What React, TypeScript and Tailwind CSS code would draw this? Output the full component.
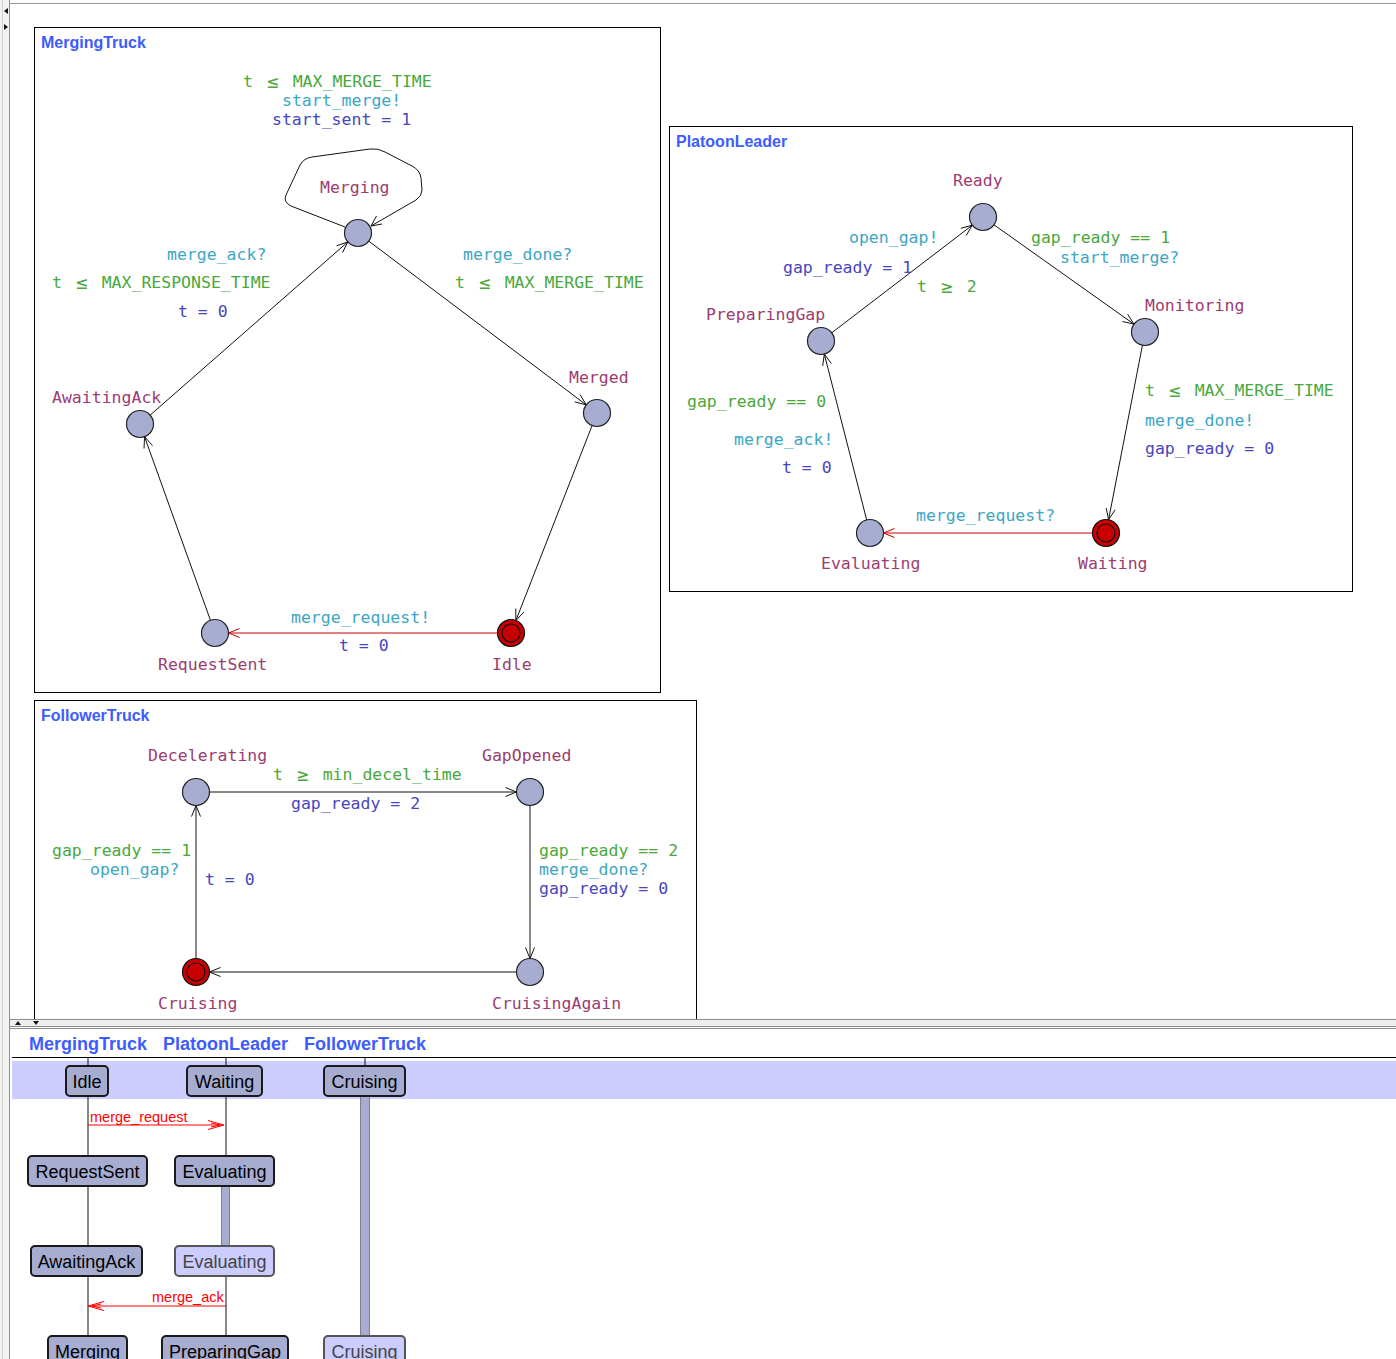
import React from 'react'

// monospace cell width for DejaVu Sans Mono at 16.5px
const CW = 9.93
const C = { loc: '#9c3c70', guard: '#48a83c', sync: '#3ca6c4', upd: '#4646c0' }

type Pt = { x: number; y: number }

function Label({ x, y, c, s }: { x: number; y: number; c: string; s: string }) {
    // "<=" and ">=" take two cells, drawn as one centred glyph
    const out: React.ReactNode[] = []
    let run = ''
    let start = 0
    const flush = (end: number) => {
        const lead = run.length - run.trimStart().length
        const t = run.trim()
        if (t) out.push(<text key={'r' + start} x={x + (start + lead) * CW} y={y} fill={c} dominantBaseline="central">{t}</text>)
        run = ''
        start = end
    }
    let i = 0
    while (i < s.length) {
        const two = s.slice(i, i + 2)
        if (two === '<=' || two === '>=') {
            flush(i)
            out.push(<text key={'l' + i} x={x + (i + 1) * CW} y={y} fill={c} fontSize={19} textAnchor="middle" dominantBaseline="central">{two === '<=' ? '≤' : '≥'}</text>)
            i += 2
            start = i
        } else {
            run += s[i]
            i++
        }
    }
    flush(i)
    return <g>{out}</g>
}

function Loc({ x, y, init }: { x: number; y: number; init?: boolean }) {
    if (init) {
        return (
            <g>
                <circle cx={x} cy={y} r={13.5} fill="#c80000" stroke="#111" strokeWidth={1.2} />
                <circle cx={x} cy={y} r={9} fill="none" stroke="#111" strokeWidth={1.2} />
            </g>
        )
    }
    return <circle cx={x} cy={y} r={13.5} fill="#a6add0" stroke="#222" strokeWidth={1.2} />
}

function Edge({ a, b, red }: { a: Pt; b: Pt; red?: boolean }) {
    const dx = b.x - a.x
    const dy = b.y - a.y
    const L = Math.hypot(dx, dy)
    const ux = dx / L
    const uy = dy / L
    const tx = b.x - ux * 13.5
    const ty = b.y - uy * 13.5
    const bx = tx - ux * 11
    const by = ty - uy * 11
    const col = red ? '#c80000' : '#111'
    return (
        <g stroke={col} strokeWidth={1} fill="none">
            <line x1={a.x} y1={a.y} x2={tx} y2={ty} />
            <path d={`M${bx + uy * 4.5} ${by - ux * 4.5} L${tx} ${ty} L${bx - uy * 4.5} ${by + ux * 4.5}`} />
        </g>
    )
}

function Template({ pos, px, py, w, h, title, children }: { pos: string; px: number; py: number; w: number; h: number; title: string; children: React.ReactNode }) {
    return (
        <div className={`absolute border border-black bg-white ${pos}`}>
            <div className="pl-[6px] pt-[6px] font-['Liberation_Sans',Arial,sans-serif] font-bold text-[16px] leading-[18px] text-[#3c5cff]">{title}</div>
            <svg className="absolute -left-px -top-px overflow-visible font-['DejaVu_Sans_Mono',monospace] text-[16.5px]" width={w} height={h} viewBox={`${px} ${py} ${w} ${h}`}>
                {children}
            </svg>
        </div>
    )
}

// MergingTruck locations
const mMerging = { x: 358, y: 233 }
const mAwait = { x: 140, y: 424 }
const mMerged = { x: 597, y: 413 }
const mReq = { x: 215, y: 633 }
const mIdle = { x: 511, y: 633 }

// PlatoonLeader locations
const pReady = { x: 983, y: 217 }
const pMon = { x: 1145, y: 332 }
const pPrep = { x: 821, y: 341 }
const pEval = { x: 870, y: 533 }
const pWait = { x: 1106, y: 533 }

// FollowerTruck locations
const fDec = { x: 196, y: 792 }
const fGap = { x: 530, y: 792 }
const fCru = { x: 196, y: 972 }
const fAgain = { x: 530, y: 972 }

const mscBoxes = [
    { x: 66, y: 1065, w: 42, t: 'Idle' },
    { x: 187, y: 1065, w: 75, t: 'Waiting' },
    { x: 324, y: 1065, w: 81, t: 'Cruising' },
    { x: 28, y: 1155, w: 119, t: 'RequestSent' },
    { x: 175, y: 1155, w: 99, t: 'Evaluating' },
    { x: 31, y: 1245, w: 111, t: 'AwaitingAck' },
    { x: 175, y: 1245, w: 99, t: 'Evaluating', light: true },
    { x: 48, y: 1335, w: 79, t: 'Merging' },
    { x: 162, y: 1335, w: 126, t: 'PreparingGap' },
    { x: 324, y: 1335, w: 81, t: 'Cruising', light: true },
]

export default function App() {
    return (
        <div className="flex w-[1396px] h-[1359px] overflow-hidden bg-white">
            {/* left splitter strip */}
            <div className="relative w-[10px] shrink-0 bg-[#f2f2f2] border-r border-[#8c8c8c]">
                <div className="absolute left-[2px] top-0 bottom-0 w-px bg-[#d0d0d0]" />
                <svg className="absolute left-0 top-0" width={10} height={36}>
                    <path d="M4 11 L8 8 L8 14 Z" fill="#111" />
                    <path d="M8 27 L4 24 L4 30 Z" fill="#111" />
                </svg>
            </div>

            <div className="flex-1 min-w-0 flex flex-col">
                <div className="h-[3px] shrink-0" />

                {/* editor canvas */}
                <div className="relative h-[1016px] shrink-0 border-t border-[#9a9a9a] overflow-hidden">
                    <Template pos="left-[24px] top-[23px] w-[627px] h-[666px]" px={34} py={27} w={627} h={666} title="MergingTruck">
                        <path d="M345 227 L291 206 Q283 202 286 195 L300 165 Q304 158 312 157 L370 149 Q378 148 385 152 L412 166 Q420 170 421 178 L422 190 Q422 196 416 200 L371 226" fill="none" stroke="#111" strokeWidth={1} />
                        <path d="M376.5 216 L371 226 L382 224" fill="none" stroke="#111" strokeWidth={1} />
                        <Edge a={mAwait} b={mMerging} />
                        <Edge a={mMerging} b={mMerged} />
                        <Edge a={mMerged} b={mIdle} />
                        <Edge a={mIdle} b={mReq} red />
                        <Edge a={mReq} b={mAwait} />
                        <Loc {...mMerging} />
                        <Loc {...mAwait} />
                        <Loc {...mMerged} />
                        <Loc {...mReq} />
                        <Loc {...mIdle} init />
                        <Label x={243} y={81} c={C.guard} s="t <= MAX_MERGE_TIME" />
                        <Label x={282} y={100} c={C.sync} s="start_merge!" />
                        <Label x={272} y={119} c={C.upd} s="start_sent = 1" />
                        <Label x={320} y={187} c={C.loc} s="Merging" />
                        <Label x={167} y={254} c={C.sync} s="merge_ack?" />
                        <Label x={52} y={282} c={C.guard} s="t <= MAX_RESPONSE_TIME" />
                        <Label x={178} y={311} c={C.upd} s="t = 0" />
                        <Label x={463} y={254} c={C.sync} s="merge_done?" />
                        <Label x={455} y={282} c={C.guard} s="t <= MAX_MERGE_TIME" />
                        <Label x={52} y={397} c={C.loc} s="AwaitingAck" />
                        <Label x={569} y={377} c={C.loc} s="Merged" />
                        <Label x={291} y={617} c={C.sync} s="merge_request!" />
                        <Label x={339} y={645} c={C.upd} s="t = 0" />
                        <Label x={158} y={664} c={C.loc} s="RequestSent" />
                        <Label x={492} y={664} c={C.loc} s="Idle" />
                    </Template>

                    <Template pos="left-[659px] top-[122px] w-[684px] h-[466px]" px={669} py={126} w={684} h={466} title="PlatoonLeader">
                        <Edge a={pPrep} b={pReady} />
                        <Edge a={pReady} b={pMon} />
                        <Edge a={pMon} b={pWait} />
                        <Edge a={pWait} b={pEval} red />
                        <Edge a={pEval} b={pPrep} />
                        <Loc {...pReady} />
                        <Loc {...pMon} />
                        <Loc {...pPrep} />
                        <Loc {...pEval} />
                        <Loc {...pWait} init />
                        <Label x={953} y={180} c={C.loc} s="Ready" />
                        <Label x={849} y={237} c={C.sync} s="open_gap!" />
                        <Label x={783} y={267} c={C.upd} s="gap_ready = 1" />
                        <Label x={917} y={286} c={C.guard} s="t >= 2" />
                        <Label x={1031} y={237} c={C.guard} s="gap_ready == 1" />
                        <Label x={1060} y={257} c={C.sync} s="start_merge?" />
                        <Label x={1145} y={305} c={C.loc} s="Monitoring" />
                        <Label x={706} y={314} c={C.loc} s="PreparingGap" />
                        <Label x={1145} y={390} c={C.guard} s="t <= MAX_MERGE_TIME" />
                        <Label x={1145} y={420} c={C.sync} s="merge_done!" />
                        <Label x={1145} y={448} c={C.upd} s="gap_ready = 0" />
                        <Label x={687} y={401} c={C.guard} s="gap_ready == 0" />
                        <Label x={734} y={439} c={C.sync} s="merge_ack!" />
                        <Label x={782} y={467} c={C.upd} s="t = 0" />
                        <Label x={916} y={515} c={C.sync} s="merge_request?" />
                        <Label x={821} y={563} c={C.loc} s="Evaluating" />
                        <Label x={1078} y={563} c={C.loc} s="Waiting" />
                    </Template>

                    <Template pos="left-[24px] top-[696px] w-[663px] h-[360px]" px={34} py={700} w={663} h={360} title="FollowerTruck">
                        <Edge a={fDec} b={fGap} />
                        <Edge a={fGap} b={fAgain} />
                        <Edge a={fAgain} b={fCru} />
                        <Edge a={fCru} b={fDec} />
                        <Loc {...fDec} />
                        <Loc {...fGap} />
                        <Loc {...fCru} init />
                        <Loc {...fAgain} />
                        <Label x={148} y={755} c={C.loc} s="Decelerating" />
                        <Label x={482} y={755} c={C.loc} s="GapOpened" />
                        <Label x={273} y={774} c={C.guard} s="t >= min_decel_time" />
                        <Label x={291} y={803} c={C.upd} s="gap_ready = 2" />
                        <Label x={52} y={850} c={C.guard} s="gap_ready == 1" />
                        <Label x={90} y={869} c={C.sync} s="open_gap?" />
                        <Label x={205} y={879} c={C.upd} s="t = 0" />
                        <Label x={539} y={850} c={C.guard} s="gap_ready == 2" />
                        <Label x={539} y={869} c={C.sync} s="merge_done?" />
                        <Label x={539} y={888} c={C.upd} s="gap_ready = 0" />
                        <Label x={158} y={1003} c={C.loc} s="Cruising" />
                        <Label x={492} y={1003} c={C.loc} s="CruisingAgain" />
                    </Template>
                </div>

                {/* horizontal splitter */}
                <div className="relative h-[8px] shrink-0 border-y border-[#8c8c8c] bg-[#eeeeee]">
                    <svg className="absolute left-0 top-0" width={40} height={6}>
                        <path d="M5 5 L8 1 L11 5 Z" fill="#111" />
                        <path d="M23 1 L29 1 L26 5 Z" fill="#111" />
                    </svg>
                </div>
                <div className="h-[2px] shrink-0 mt-px border-t border-[#8c8c8c]" />

                {/* message sequence chart */}
                <div className="ml-[2px] h-[28px] shrink-0 flex items-center pt-[2px] pl-[17px] gap-[16px] border-b border-black font-['Liberation_Sans',Arial,sans-serif] font-bold text-[18px] text-[#3c5cff]">
                    <span>MergingTruck</span>
                    <span>PlatoonLeader</span>
                    <span>FollowerTruck</span>
                </div>
                <svg className="shrink-0 font-['Liberation_Sans',Arial,sans-serif]" width={1386} height={302} viewBox="10 1057 1386 302">
                    <rect x={12} y={1060} width={1384} height={38} fill="#ccccff" />
                    <line x1={88} y1={1057} x2={88} y2={1359} stroke="#111" />
                    <line x1={226} y1={1057} x2={226} y2={1359} stroke="#111" />
                    <line x1={365} y1={1057} x2={365} y2={1066} stroke="#111" />
                    <rect x={221.5} y={1185} width={8} height={60} fill="#a6add0" stroke="#6a6a80" strokeWidth={0.8} />
                    <rect x={360.5} y={1095} width={9} height={240} fill="#a6add0" stroke="#6a6a80" strokeWidth={0.8} />

                    <line x1={88} y1={1124} x2={223} y2={1124} stroke="#ff0000" />
                    <path d="M208 1119.5 L224 1124 L208 1128.5 M211 1122 L220 1124 L211 1126" fill="none" stroke="#ff0000" />
                    <text x={90} y={1116} fill="#ff0000" fontSize={14.5} dominantBaseline="central">merge_request</text>

                    <line x1={89} y1={1305} x2={226} y2={1305} stroke="#ff0000" />
                    <path d="M104 1300.5 L88 1305 L104 1309.5 M101 1303 L92 1305 L101 1307" fill="none" stroke="#ff0000" />
                    <text x={152} y={1296} fill="#ff0000" fontSize={14.5} dominantBaseline="central">merge_ack</text>

                    {mscBoxes.map((b, i) => (
                        <g key={i}>
                            <rect x={b.x} y={b.y} width={b.w} height={30} rx={4} fill={b.light ? '#ccccff' : '#a6add0'} stroke={b.light ? '#555' : '#1a1a1a'} strokeWidth={2} />
                            <text x={b.x + b.w / 2} y={b.y + 16} textAnchor="middle" dominantBaseline="central" fontSize={18} fill={b.light ? '#444' : '#000'}>{b.t}</text>
                        </g>
                    ))}
                </svg>
            </div>
        </div>
    )
}
